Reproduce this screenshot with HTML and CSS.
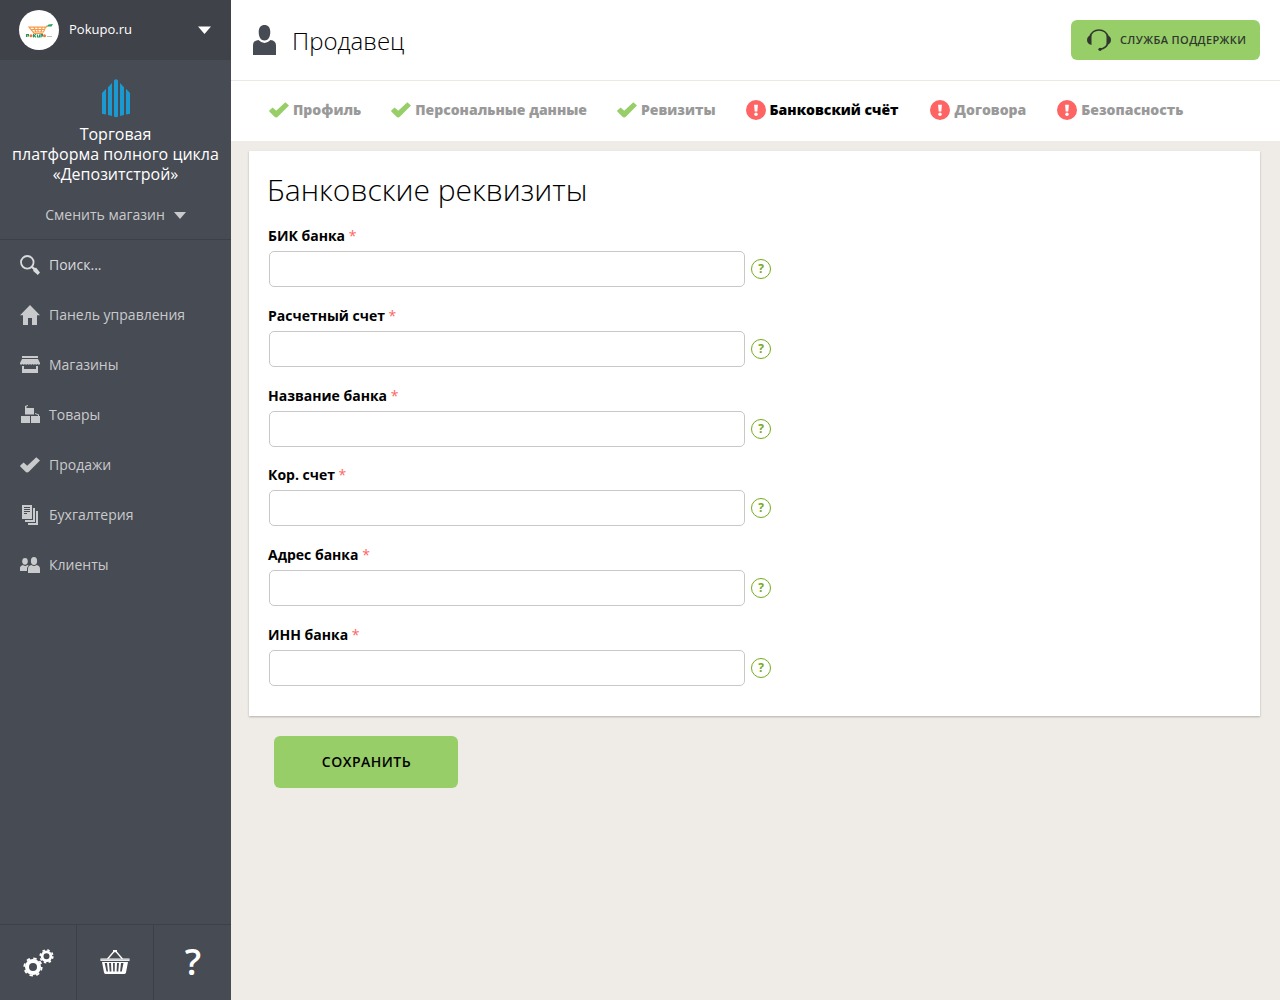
FILE: index.html
```html
<!DOCTYPE html>
<html lang="ru">
<head>
<meta charset="utf-8">
<title>Продавец</title>
<link rel="stylesheet" href="styles.css">
</head>
<body>
<svg class="defs" width="0" height="0">
  <symbol id="check" viewBox="0 0 20 20"><path d="M0.3 10.6 3.6 7.6 7.2 10.8 16.3 2.2 20 5.6 8.8 16.7Q7.1 18.3 5.3 16.6L0.5 11.8Q-.1 11.1.3 10.6Z"/></symbol>
  <symbol id="alert" viewBox="0 0 20 20"><circle cx="10" cy="10" r="10" fill="#ff6464"/><path d="M8.1 4.8h3.8l-.6 6.8H8.7z" fill="#fff"/><circle cx="10" cy="14.200" r="1.700" fill="#fff"/></symbol>
</svg>
<div class="app">
  <aside class="sidebar">
    <div class="account">
      <span class="avatar"><svg width="28" height="14" viewBox="0 0 28 14"><path d="M4 3.200h16.500L18.500 8H8zM5.500 5.500h14M9 3.500l2 4.500M13 3.500v4.500M17 3.500l-1 4.500M20 4l2.500-2.500M8 8l1 1.500h9" fill="none" stroke="#f79a4a" stroke-width="1.200"/><path d="M22 2.500l1.500-2 4.500-.5-1.500 2.500z" fill="#2ba05a"/><path d="M1.500 13v-2.500h2V12h-2M8.500 10v3.500M11 10.300l-2 1.500 2 1.500M12.500 10.500V13h2v-2.500M16 13.500v-3h1.500V12H16" fill="none" stroke="#27955a" stroke-width="1.100"/><circle cx="6" cy="11.800" r="1.500" fill="#ef7740"/><circle cx="19.500" cy="11.800" r="1.500" fill="#ef7740"/><path d="M22 12.500h5" stroke="#a9c9b5"/></svg></span>
      <span class="account-name">Pokupo.ru</span>
      <svg class="caret" width="13" height="8" viewBox="0 0 13 8"><path d="M0 .5h13L6.500 8z"/></svg>
    </div>
    <div class="shop">
      <svg width="28" height="39" viewBox="0 0 28 39" fill="#1b9ad2"><path d="M0 14 4 9.800V35.500L0 34.700zM6 8.200 10 4V37L6 36zM12 1.500Q14-.8 16 1.500V37.500Q14 39 12 37.500zM18 4 22 8.200V36L18 37zM24 9.800 28 14V34.700L24 35.500z"/></svg>
      <div class="shop-name">Торговая<br>платформа полного цикла<br>«Депозитстрой»</div>
      <div class="shop-switch"><span>Сменить магазин</span><svg class="caret" width="12" height="8" viewBox="0 0 12 8"><path d="M0 1h12L6 8z"/></svg></div>
    </div>
    <nav class="menu">
      <a class="search"><svg viewBox="0 0 20 20"><circle cx="7.300" cy="7.300" r="6.300" fill="none" stroke="currentColor" stroke-width="1.800"/><path d="M11 12.500 12.500 11 15 13l1.200-.2L20 17.500 17.800 20l-4.600-4 .2-1.200z"/></svg>Поиск...</a>
      <a><svg viewBox="0 0 20 20"><path d="M10 0 20 10.200H17V20H12V13H8V20H3V10.200H0z"/></svg>Панель управления</a>
      <a><svg viewBox="0 0 20 20"><path d="M2 1h16v2H2zM2 4h16l2 4v1q-1 1.500-2.500 0-1.200 1.500-2.500 0-1.200 1.500-2.500 0-1.200 1.500-2.500 0-1.200 1.500-2.500 0-1.200 1.500-2.500 0-1.200 1.500-2.500 0Q1 10.500 0 9V8zM2 11h2v3h12v-3h2v7H2z"/></svg>Магазины</a>
      <a><svg viewBox="0 0 20 20"><path d="M5 3h9v6.500H5zM1 11h9v7H1zM11 11h9v7h-9zM5 3 5 1 8 0 8 1 6.500 1.500V3zM15 8l4 1.500V11h-1v-1L15 9z"/></svg>Товары</a>
      <a><svg viewBox="0 0 20 20"><use href="#check"/></svg>Продажи</a>
      <a><svg viewBox="0 0 20 20"><path fill-rule="evenodd" d="M2 0h10v14H2zM4 2v1h6V2zM4 4v1h6V4zM4 6v1h6V6zM4 8v1h3V8zM13 3h2v14H5v-2h8zM16 6h2v14H8v-2h8z"/></svg>Бухгалтерия</a>
      <a><svg viewBox="0 0 20 20"><ellipse cx="5" cy="6.300" rx="2.800" ry="3.400"/><ellipse cx="14" cy="6" rx="3.100" ry="4"/><path d="M0 16v-3.500Q.2 10.500 3 10q2 2 4.500 0l1.200.8Q7 12 7 13.500V16zM8 18v-4q0-3.500 3.500-4 2.500 2 5 0Q20 10.500 20 14v4z"/></svg>Клиенты</a>
    </nav>
    <div class="tools">
      <span><svg width="32" height="30" viewBox="0 0 32 30" fill="none" stroke="#fff"><circle cx="11" cy="19" r="6" stroke-width="4"/><circle cx="11" cy="19" r="8.700" stroke-width="1.800" stroke-dasharray="3.400 3.433"/><circle cx="24.500" cy="8.300" r="4.400" stroke-width="2.800"/><circle cx="24.500" cy="8.300" r="6.300" stroke-width="1.600" stroke-dasharray="2.500 2.448"/></svg></span>
      <span><svg width="30" height="26" viewBox="0 0 30 26"><path d="M7.500 9 14 1.500h2L22.500 9" fill="none" stroke="#fff" stroke-width="1.300"/><path d="M13 0h4v2h-4zM.5 8.500h29V11H.5z" fill="#fff"/><path d="M1 9.800h28" stroke="#474b53" stroke-width=".4"/><path fill="#fff" fill-rule="evenodd" d="M2 12h26l-2 10.500q-.3 1.500-2 1.500H6q-1.700 0-2-1.500zM4.700 13l1.800 8.500h1.500L7 13zM9 13l.7 8.500h1.700L11 13zM13 13l.2 8.500h1.500l.1-8.500zM17 13l-.4 8.500h1.700l.7-8.500zM21 13l-.9 8.500h1.700l1.700-8.500z"/></svg></span>
      <span class="help-mark">?</span>
    </div>
  </aside>
  <main class="main">
    <header class="header">
      <svg width="23" height="30" viewBox="0 0 23 30" fill="#474b53"><path d="M11.500 0C15 0 17.300 2.500 17.300 7c0 5-2.300 8.500-5.800 8.500S5.700 12 5.700 7C5.700 2.500 8 0 11.500 0zM0 30V20.500Q0 15.500 5.500 15q6 6 12 0Q23 15.500 23 20.500V30z"/></svg>
      <h1>Продавец</h1>
      <button class="support"><svg width="26" height="22" viewBox="0 0 26 22"><path d="M4 8Q6 1 13 1t9 7M22 14q-1.500 5-8 6.300" fill="none" stroke="#31372f" stroke-width="1.700"/><path d="M5.500 6v10Q1 15 1 11t4.500-5zM20.500 6v10q4.500-1 4.500-5t-4.500-5z" fill="#31372f"/><circle cx="14" cy="20.300" r="1.600" fill="#31372f"/></svg><span>СЛУЖБА ПОДДЕРЖКИ</span></button>
    </header>
    <nav class="steps">
      <a><svg><use href="#check"/></svg>Профиль</a>
      <a><svg><use href="#check"/></svg>Персональные данные</a>
      <a><svg><use href="#check"/></svg>Ревизиты</a>
      <a class="current"><svg><use href="#alert"/></svg>Банковский счёт</a>
      <a class="contracts"><svg><use href="#alert"/></svg>Договора</a>
      <a><svg><use href="#alert"/></svg>Безопасность</a>
    </nav>
    <form class="content">
      <section class="card">
        <h2>Банковские реквизиты</h2>
        <div class="field"><label>БИК банка <i>*</i></label><div class="control"><input type="text"><b>?</b></div></div>
        <div class="field"><label>Расчетный счет <i>*</i></label><div class="control"><input type="text"><b>?</b></div></div>
        <div class="field"><label>Название банка <i>*</i></label><div class="control"><input type="text"><b>?</b></div></div>
        <div class="field"><label>Кор. счет <i>*</i></label><div class="control"><input type="text"><b>?</b></div></div>
        <div class="field"><label>Адрес банка <i>*</i></label><div class="control"><input type="text"><b>?</b></div></div>
        <div class="field"><label>ИНН банка <i>*</i></label><div class="control"><input type="text"><b>?</b></div></div>
      </section>
      <button class="save" type="button">СОХРАНИТЬ</button>
    </form>
  </main>
</div>
</body>
</html>
```
FILE: styles.css
```css
* { box-sizing: border-box; }
body { margin: 0; font-family: "Open Sans", "Noto Sans", sans-serif; font-size: 14px; color: #000; }
button { border: 0; font-family: inherit; padding: 0; }
svg { flex: none; display: block; }
.defs { position: absolute; }
.app { display: flex; height: 1000px; overflow: hidden; }

.sidebar { width: 231px; flex: none; display: flex; flex-direction: column; background: #474b53; color: #c9cacc; }
.account { height: 60px; flex: none; background: #3f4249; display: flex; align-items: center; padding: 0 20px 0 19px; color: #fff; font-size: 13px; }
.avatar { width: 40px; height: 40px; border-radius: 50%; background: #fff; display: flex; align-items: center; justify-content: center; margin-right: 10px; padding-top: 1px; }
.account-name { flex: 1; padding-bottom: 2px; }
.caret { fill: currentColor; }
.shop { height: 180px; flex: none; border-bottom: 1px solid #3c4047; display: flex; flex-direction: column; align-items: center; padding-top: 19px; }
.shop > svg { margin-left: 1px; }
.shop-name { margin-top: 6px; color: #fff; font-size: 16px; line-height: 20px; text-align: center; white-space: nowrap; }
.shop-switch { display: flex; align-items: center; gap: 9px; margin-top: 21px; line-height: 20px; }
.menu a { height: 50px; display: flex; align-items: center; gap: 9px; padding: 0 0 2px 20px; }
.menu svg { width: 20px; height: 20px; margin-top: 2px; fill: currentColor; }
.menu .search { color: #d9dadc; }
.tools { margin-top: auto; height: 76px; border-top: 1px solid #3c4047; display: flex; }
.tools span { flex: 1; display: flex; align-items: center; justify-content: center; }
.tools span + span { border-left: 1px solid #3c4047; }
.tools .help-mark { color: #fff; font-size: 36px; font-weight: 600; padding: 0 0 2px 1px; }

.main { flex: 1; min-width: 0; background: #efebe6; }
.header { height: 81px; background: #fff; border-bottom: 1px solid #ebe9e3; display: flex; align-items: center; padding: 0 20px 0 22px; }
h1 { margin: 2px auto 0 16px; font-size: 24px; font-weight: 300; line-height: 34px; }
.support { width: 189px; height: 40px; border-radius: 6px; background: #97ce68; color: #31372f; display: flex; align-items: center; padding-left: 15px; gap: 8px; font-size: 11px; font-weight: 600; letter-spacing: .4px; white-space: nowrap; }
.support span { padding-bottom: 2px; }
.steps { height: 60px; background: #fff; display: flex; align-items: center; gap: 30px; padding: 0 0 4px 38px; }
.steps a { display: flex; align-items: center; gap: 4px; color: #999; font-weight: 800; white-space: nowrap; }
.steps svg { width: 20px; height: 20px; margin-top: 2px; fill: #97ce68; }
.steps .current { color: #000; margin-right: 1px; }
.steps .contracts { gap: 5px; margin-right: 1px; }

.content { padding: 10px 20px 0 18px; }
.card { height: 565px; background: #fff; box-shadow: 0 1px 2px rgba(0, 0, 0, .25); padding: 17px 19px 0; }
h2 { margin: 0 0 14px -1px; font-size: 30px; font-weight: 300; line-height: 44px; }
.field { height: 79.8px; }
.field label { display: block; height: 25px; line-height: 19px; font-weight: 700; }
.field i { color: #ff6464; font-style: normal; font-weight: 400; }
.control { display: flex; align-items: center; gap: 6px; padding-left: 1px; }
.control input { width: 476px; height: 36px; border: 1px solid #c8c8c8; border-radius: 5px; background: #fff; outline: 0; }
.control b { width: 20px; height: 20px; border: 1px solid #73ac1a; border-radius: 50%; color: #73ac1a; font-size: 12px; line-height: 18px; text-align: center; }
.save { display: block; width: 184px; height: 52px; margin: 20px 0 0 25px; padding: 0 0 2px 1px; border-radius: 6px; background: #97ce68; color: #000; font-size: 14px; font-weight: 600; letter-spacing: .5px; }
```
